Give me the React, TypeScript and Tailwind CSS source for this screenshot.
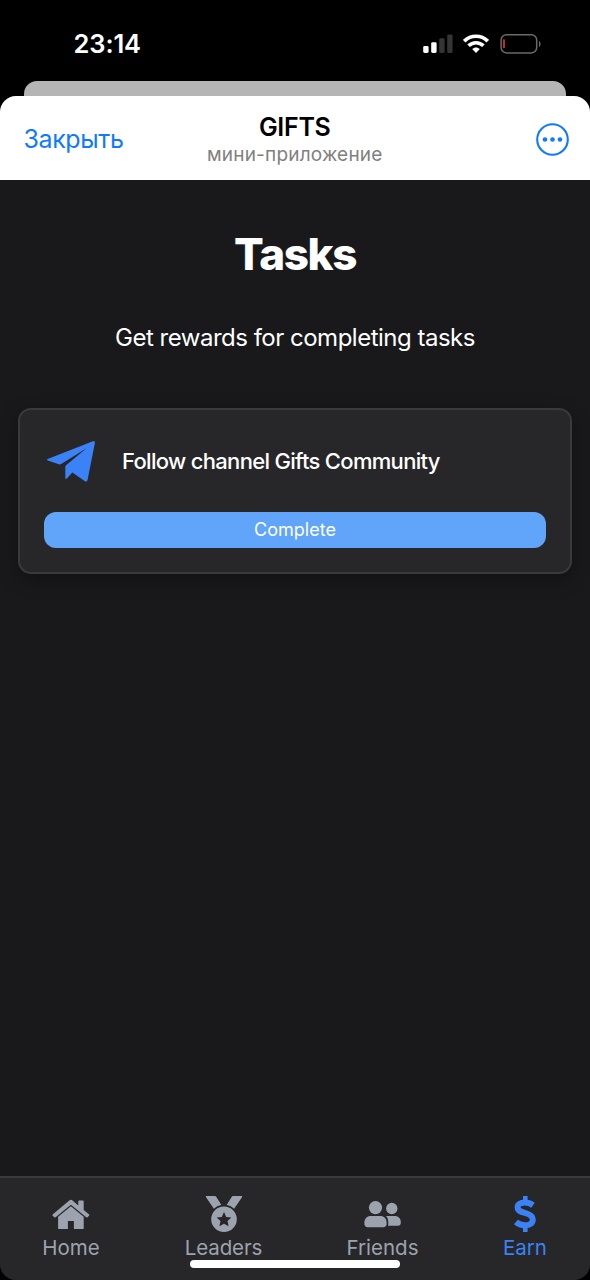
import type { ReactNode } from 'react';

interface TabProps {
  label: string;
  icon: ReactNode;
  className: string;
  labelClass: string;
}

function PlaneIcon() {
  return (
    <svg className="-mt-[2px]" width="48" height="41" viewBox="0 0 48 41" fill="#3b82f6">
      <path d="M.7 18 45.9.3c1.4-.4 2.2.3 2 1.7L40.6 38.8c-.4 1.8-1.5 2.2-3 1.2L25.4 31.4 19.8 37.6c-.8.8-1.5.5-1.5-.6V26c0-.7.2-1.2.8-1.8L39.5 7.3 14.2 23c-.9.5-1.5.6-2.4.3L.8 19.5c-1.1-.4-1.1-1.1-.1-1.5z" />
    </svg>
  );
}

function HomeIcon() {
  return (
    <svg width="38" height="36" viewBox="0 0 38 36" fill="currentColor">
      <path d="M17.3 4.5.9 18.2c-.5.5-.6 1-.1 1.6l1.2 1.3c.5.5 1 .5 1.6.1L18.9 8.7l15.3 12.5c.6.4 1.1.4 1.6-.1l1.2-1.3c.5-.6.4-1.1-.1-1.6l-5.2-4.3V5.4c0-.6-.3-.9-.9-.9h-3.6c-.6 0-.9.3-.9.9v4.1l-5.8-5c-1-.9-2.2-.9-3.2 0z" />
      <path d="M18.9 10.3 6.1 20.7v11.5c0 .6.3.9.9.9h8.9v-8.2h6v8.2h8.9c.6 0 .9-.3.9-.9V20.7z" />
    </svg>
  );
}

function MedalIcon() {
  return (
    <svg width="38" height="38" viewBox="0 0 38 38" fill="currentColor">
      <path d="M1.7 1h8.2c.6 0 1 .2 1.3.7l5.2 8.3c-3 .6-5.5 1.8-7.5 3.8L1 2.2C.6 1.5.9 1 1.7 1z" />
      <path d="M36.3 1h-8.2c-.6 0-1 .2-1.3.7L21.6 10c3 .6 5.5 1.8 7.5 3.8L37 2.2c.4-.7.1-1.2-.7-1.2z" />
      <path fillRule="evenodd" d="M19 11.5a12.8 12.8 0 1 0 0 25.6 12.8 12.8 0 0 0 0-25.6zm0 5.5 2.2 4.9 5.2.6-3.9 3.6 1.1 5.2-4.6-2.6-4.6 2.6 1.1-5.2-3.9-3.6 5.2-.6z" />
    </svg>
  );
}

function FriendsIcon() {
  return (
    <svg width="38" height="36" viewBox="0 0 38 36" fill="currentColor">
      <circle cx="11.5" cy="11.6" r="6.6" />
      <circle cx="27.8" cy="12.5" r="5.7" />
      <path d="M6.8 20h9.3c4 0 6.5 2.7 6.5 6.6v1.5c0 2-1.3 3.2-3.3 3.2H3.7c-2 0-3.3-1.2-3.3-3.2v-1.5c0-3.9 2.6-6.6 6.4-6.6z" />
      <path d="M22 20h8.7c3.7 0 6.1 2.4 6.1 6v.8c0 1.9-1.1 2.9-2.9 2.9H24c.2-.7.3-1.3.3-2v-1.3c0-2.5-.8-4.8-2.3-6.4z" />
    </svg>
  );
}

function DollarIcon() {
  return (
    <svg width="24" height="38" viewBox="0 0 24 38" fill="none" stroke="currentColor">
      <path d="M12.3 1v5M12.3 32v5" strokeWidth="4.6" />
      <path d="M20 10.2C17.8 8.6 14.8 7.5 11.8 7.5c-4.2 0-7.2 1.8-7.2 4.8 0 3.3 3 4.4 7.3 5.6 4.8 1.4 7.9 2.9 7.9 6.5 0 3.7-3.2 5.9-7.7 5.9-3.6 0-6.9-1.2-9.2-3.2" strokeWidth="6" />
    </svg>
  );
}

function Tab({ label, icon, className, labelClass }: TabProps) {
  return (
    <div className={`flex flex-col items-center ${className}`}>
      <div className="flex h-[38px] items-center justify-center">{icon}</div>
      <span className={`mt-[3px] whitespace-nowrap leading-6 ${labelClass}`}>{label}</span>
    </div>
  );
}

function StatusBar() {
  return (
    <div className="flex h-[81px] items-start justify-between pr-12 pl-[73.5px]">
      <span className="mt-[29px] text-[25.5px] leading-[30px] font-semibold tracking-[-0.1px] text-white">23:14</span>
      <div className="mt-[33px] flex items-center">
        <svg width="31" height="22" viewBox="0 0 31 22" fill="#fff">
          <rect x=".2" y="13" width="5.4" height="7" rx="1.4" />
          <rect x="8.2" y="9.2" width="5.4" height="10.8" rx="1.4" />
          <rect x="16.2" y="5.3" width="5.4" height="14.7" rx="1.4" fill="#353535" />
          <rect x="24.2" y="1.4" width="5.4" height="18.6" rx="1.4" fill="#353535" />
        </svg>
        <svg className="ml-[9px]" width="26" height="22" viewBox="0 0 26 22" fill="none" stroke="#fff" strokeWidth="3.7">
          <path d="M1.2 8.2c6.6-6.6 17-6.6 23.6 0" />
          <path d="M5.6 12.8c4.2-4.1 10.6-4.1 14.8 0" />
          <path d="m13 19.9-3.8-3.8c2.1-2.1 5.5-2.1 7.6 0z" fill="#fff" stroke="none" />
        </svg>
        <svg className="ml-[11px]" width="42" height="22" viewBox="0 0 42 22">
          <rect x="1.1" y="1.7" width="35.6" height="18.2" rx="5.4" fill="none" stroke="#6a6a6a" strokeWidth="1.5" />
          <path d="M39 8v6c2-.6 2-5.4 0-6z" fill="#6a6a6a" />
          <rect x="3.2" y="6.3" width="1.6" height="9" rx=".8" fill="#f2363a" />
        </svg>
      </div>
    </div>
  );
}

export default function App() {
  return (
    <div className="h-[1280px] w-[590px] overflow-hidden bg-black font-['Inter',sans-serif]">
      <StatusBar />
      {/* Edge of the sheet underneath */}
      <div className="mx-6 h-[15px] rounded-t-[13px] bg-[#b5b5b5]"></div>

      <div className="flex h-[1184px] flex-col overflow-hidden rounded-t-[16px] rounded-b-[16px] bg-[#19191b]">
        <header className="grid h-[84px] shrink-0 grid-cols-[1fr_auto_1fr] items-center bg-white pr-[21px] pl-[23.5px]">
          <span className="mt-px text-[25px] leading-8 tracking-[-0.4px] text-[#0f7aff]">Закрыть</span>
          <div className="-ml-[3px] flex flex-col items-center pt-[3px]">
            <span className="text-[25px] leading-[29px] font-semibold tracking-[-0.3px] text-black">GIFTS</span>
            <span className="text-[19px] leading-[25px] tracking-[0.2px] text-[#808080]">мини-приложение</span>
          </div>
          <svg className="mt-[3px] justify-self-end" width="33" height="33" viewBox="0 0 33 33">
            <circle cx="16.5" cy="16.5" r="15.3" fill="none" stroke="#0f7aff" strokeWidth="2.1" />
            <circle cx="9" cy="16.5" r="2.3" fill="#0f7aff" />
            <circle cx="16.5" cy="16.5" r="2.3" fill="#0f7aff" />
            <circle cx="24" cy="16.5" r="2.3" fill="#0f7aff" />
          </svg>
        </header>

        <main className="flex-1 px-[18px] pt-[49px] text-white">
          <h1 className="text-center text-[44px] leading-[50px] font-extrabold tracking-[-1.4px]">Tasks</h1>
          <p className="mt-[43px] text-center text-[24px] leading-8 tracking-[-0.5px]">Get rewards for completing tasks</p>

          <div className="mt-[54px] h-[166px] rounded-[13px] border-2 border-[#3a3a3c] bg-[#272729] px-6 pt-[29px] shadow-[0_6px_20px_rgba(0,0,0,0.3)]">
            <div className="flex h-[46px] items-center pl-[3px]">
              <PlaneIcon />
              <span className="-mt-0.5 ml-[27px] text-[22px] leading-7 font-medium tracking-[-0.69px]">Follow channel Gifts Community</span>
            </div>
            <button className="mt-[27px] block h-9 w-full rounded-xl bg-[#60a5fa] text-[18px] leading-9">Complete</button>
          </div>
        </main>

        <nav className="flex h-[104px] shrink-0 border-t-2 border-[#3a3a3c] bg-[#272729] pt-[17px] text-[#9ca3af]">
          <Tab label="Home" icon={<HomeIcon />} className="w-[142px]" labelClass="text-[20.5px]" />
          <Tab label="Leaders" icon={<MedalIcon />} className="w-[163px]" labelClass="text-[20.5px] tracking-[-0.1px]" />
          <Tab label="Friends" icon={<FriendsIcon />} className="w-[155px]" labelClass="text-[20.5px]" />
          <Tab label="Earn" icon={<DollarIcon />} className="w-[130px] text-[#3b82f6]" labelClass="text-[20.5px]" />
        </nav>
      </div>

      {/* Home indicator */}
      <div className="absolute top-[1260px] left-[190px] h-2 w-[210px] rounded-full bg-white"></div>
    </div>
  );
}
